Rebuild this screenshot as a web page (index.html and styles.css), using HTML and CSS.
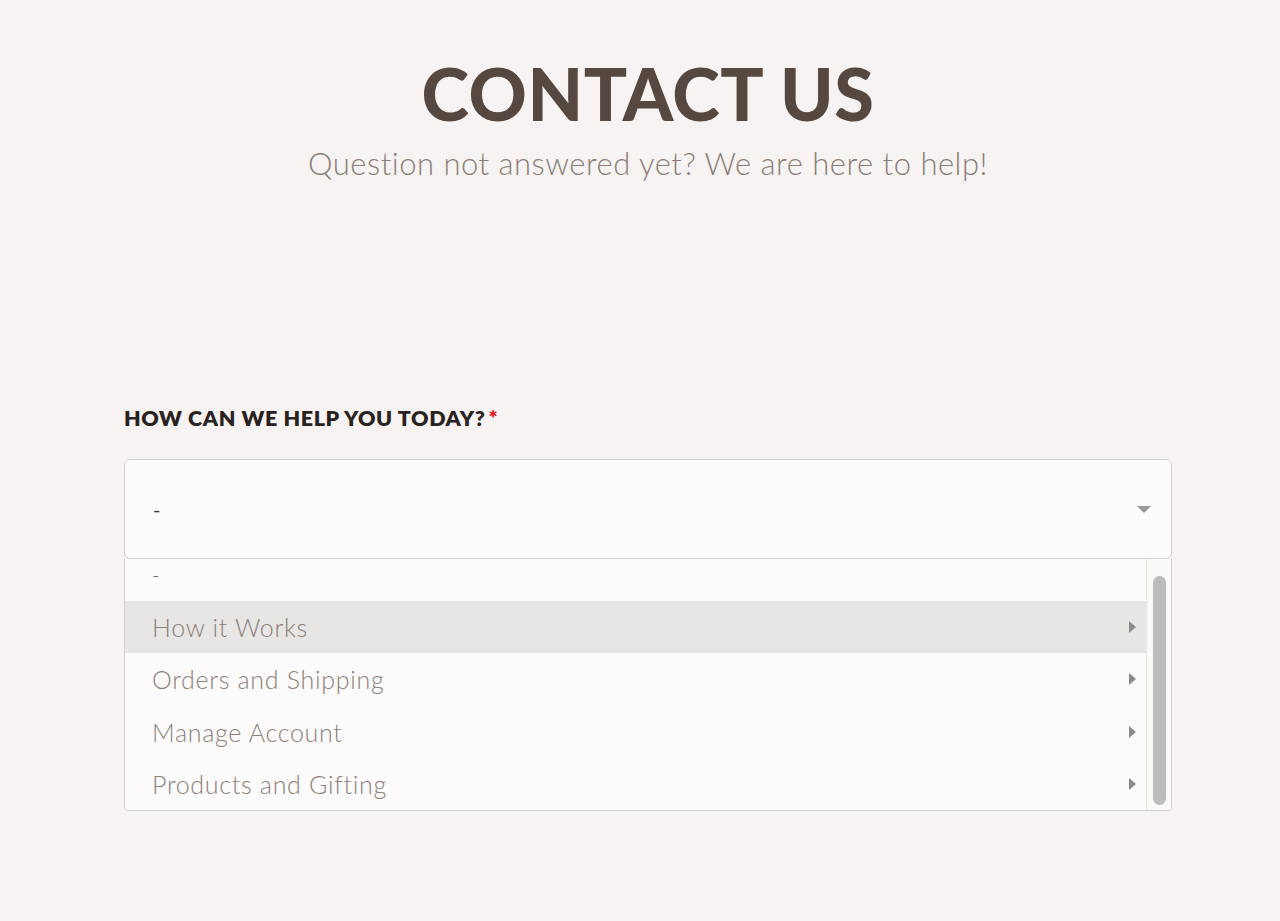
FILE: index.html
```
<!DOCTYPE html>
<html lang="en">
<head>
  <meta charset="UTF-8">
  <meta name="viewport" content="width=device-width, initial-scale=1.0">
  <title>Contact Us</title>
  <link rel="stylesheet" href="styles.css">
</head>
<body>

  <header class="hero">
    <h1>CONTACT US</h1>
    <p class="subtitle">Question not answered yet? We are here to help!</p>
  </header>

  <form class="contact-form">
    <label class="field-label">HOW CAN WE HELP YOU TODAY?<span class="required">*</span></label>

    <div class="select-box">
      <span class="select-value">-</span>
      <span class="caret-down"></span>
    </div>

    <div class="dropdown">
      <div class="dropdown-scroll">
        <ul class="options">
          <li class="option option-empty">-</li>
          <li class="option active">How it Works<span class="caret-right"></span></li>
          <li class="option">Orders and Shipping<span class="caret-right"></span></li>
          <li class="option">Manage Account<span class="caret-right"></span></li>
          <li class="option">Products and Gifting<span class="caret-right"></span></li>
        </ul>
      </div>
      <div class="scroll-track">
        <div class="scroll-thumb"></div>
      </div>
    </div>
  </form>

</body>
</html>
```

FILE: styles.css
```
body {
  font-family: Lato, "Open Sans", Arial, sans-serif;
  background: #f7f3f2;
  margin: 0;
  color: #54473f;
}
.hero {
  text-align: center;
  padding: 53px 0 0 16px;
}
.hero h1 {
  margin: 0;
  font-size: 72px;
  line-height: 80px;
  font-weight: 900;
  letter-spacing: 0.6px;
  color: #554840;
}
.subtitle {
  margin: 10px 0 0;
  font-size: 31px;
  line-height: 40px;
  font-weight: 300;
  letter-spacing: 0.5px;
  color: #8a7e79;
}
.contact-form {
  padding: 223px 108px 0 124px;
}
.field-label {
  display: block;
  font-size: 21.5px;
  font-weight: 800;
  color: #2a2220;
  letter-spacing: 0.6px;
  line-height: 24px;
}
.required {
  color: #e0141e;
  margin-left: 3px;
}
.select-box {
  margin-top: 29px;
  height: 98px;
  border: 1px solid #d3cfcd;
  border-radius: 6px;
  background: #fdfbfb;
  display: flex;
  align-items: center;
  justify-content: space-between;
  padding: 0 20px 0 28px;
}
.select-value {
  font-size: 20px;
  color: #3a3330;
}
.caret-down {
  width: 0;
  height: 0;
  border-left: 7px solid transparent;
  border-right: 7px solid transparent;
  border-top: 7px solid #9a9696;
}
.dropdown {
  display: flex;
  height: 251px;
  border: 1px solid #d3cfcd;
  border-top: none;
  border-radius: 0 0 4px 4px;
  background: #fdfbfb;
}
.dropdown-scroll {
  flex: 1;
  overflow: hidden;
}
.options {
  list-style: none;
  margin: -11px 0 0;
  padding: 0;
}
.option {
  height: 52.5px;
  display: flex;
  align-items: center;
  justify-content: space-between;
  padding: 0 10px 0 27px;
  font-size: 25px;
  font-weight: 300;
  letter-spacing: 0.7px;
  color: #8b807c;
}
.option-empty {
  color: #5c5451;
  font-size: 20px;
}
.option.active {
  background: #e8e6e5;
}
.caret-right {
  width: 0;
  height: 0;
  border-top: 6px solid transparent;
  border-bottom: 6px solid transparent;
  border-left: 7px solid #8c8a8a;
}
.scroll-track {
  width: 24px;
  border-left: 1px solid #ebe7e6;
  background: #fbf9f8;
  padding: 17px 0 5px;
  display: flex;
  justify-content: center;
}
.scroll-thumb {
  width: 13px;
  background: #bdbcbc;
  border-radius: 7px;
}
```
